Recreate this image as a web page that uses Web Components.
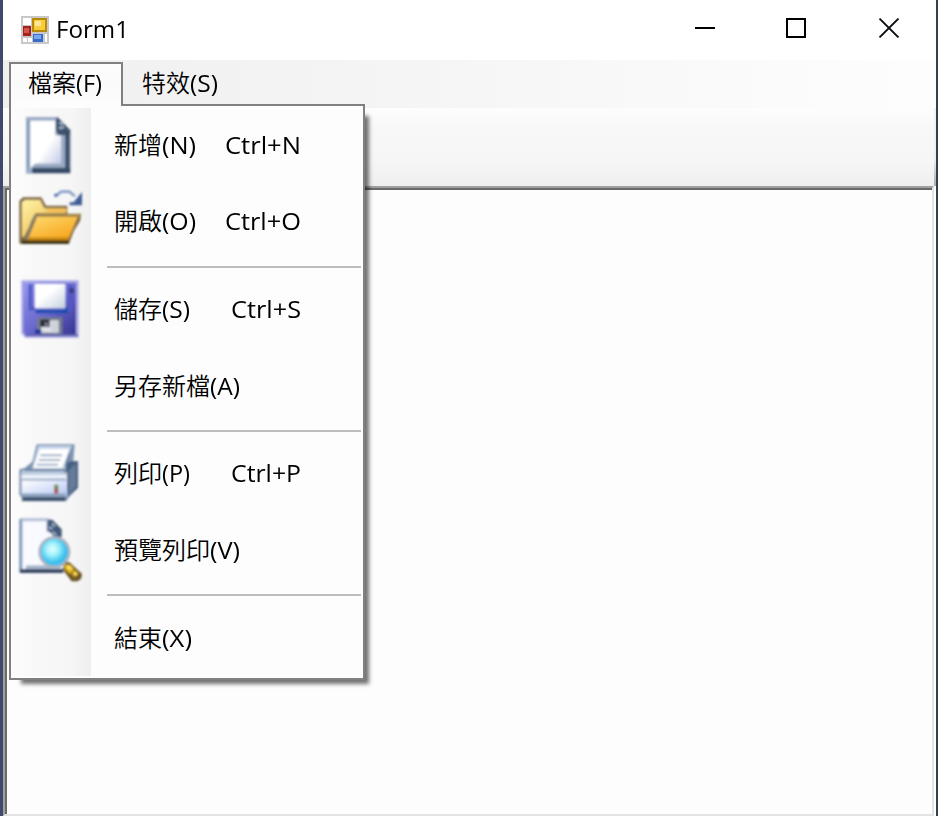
<!DOCTYPE html>
<html lang="zh-Hant"><head><meta charset="utf-8"><title>Form1</title>
<style>html,body{margin:0;width:938px;height:816px;overflow:hidden}body{font-family:"Open Sans","Noto Sans CJK TC",sans-serif}</style></head>
<body><form-window></form-window>
<script>
const define=(name,html,init)=>customElements.define(name,class extends HTMLElement{
  constructor(){super();this.attachShadow({mode:'open'}).innerHTML=html;}
  connectedCallback(){if(init)init.call(this);}
});

// A line of text; w is the width of its Latin part.
define('fit-text',`<style>:host{display:block;height:32px;white-space:pre;color:#000;font:24px/32px "Open Sans","Noto Sans CJK TC",sans-serif}
span{display:inline-block;transform-origin:0 50%}.c{font-family:"Noto Sans CJK TC",sans-serif;font-weight:350;width:auto}</style><span class="c"></span><span class="l"></span>`,function(){
  const c=this.shadowRoot.querySelector('.c'),l=this.shadowRoot.querySelector('.l');
  c.textContent=this.getAttribute('cjk')||'';l.textContent=this.getAttribute('latin')||'';
  const w=+this.getAttribute('w');this.style.width=(w+c.offsetWidth)+'px';
  l.style.transform='scaleX('+w/l.getBoundingClientRect().width+')';
});

const ART={
new:['3 9 240 228',`<path d="M48 36H142L181 76V205H48Z" fill="#354966"/><path d="M48 36H140V82H178V190H66V205H48Z" fill="#9badc9"/><path d="M57 47H135V91H153V178H72L61 190H57Z" fill="url(#paper)"/><path d="M57 46V190" stroke="#8296b5" stroke-width="7"/><path d="M142 40L178 76V91H145L138 76V44Z" fill="#40526c"/><path d="M148 53l11 5M147 69l15-2" stroke="#a9c0d4" stroke-width="6"/><path d="M171 80V194H69" fill="none" stroke="#374b68" stroke-width="11"/><path d="M158 94V180H76" fill="none" stroke="#9caac2" stroke-width="9"/>`],
open:['3 12 240 228',`<path d="M28 62L39 52H94L108 77H172V101H214L210 124L193 150L177 191H28Z" fill="#806b48"/><path d="M36 67L45 60H90L103 85H167V100H77L66 124L42 170H36Z" fill="url(#folder1)"/><path d="M110 91H170" stroke="#f6bd4e" stroke-width="8"/><path d="M82 109H204L176 175H55Z" fill="url(#folder2)"/><path d="M83 107H213" stroke="#a98a50" stroke-width="8"/><path d="M78 104L66 128L50 178" fill="none" stroke="#8a816b" stroke-width="9"/><path d="M53 177H174" stroke="#c6850c" stroke-width="9"/><path d="M35 187H177" stroke="#33280e" stroke-width="9"/><path d="M138 47L154 35H178L195 49" fill="none" stroke="#8aa1c9" stroke-width="8"/><path d="M133 46h9" stroke="#496fac" stroke-width="9"/><path d="M216 36V76H179V67H191Z" fill="#405f98"/>`],
save:['3 6 240 228',`<path d="M34 31H206V203H46L34 190Z" fill="#aaa9e7"/><path d="M40 38H198V196H48L40 185Z" fill="url(#disk)"/><path d="M61 43V116H181V45" fill="none" stroke="#5158c4" stroke-width="11"/><path d="M77 125H168V111" stroke="#164dae" stroke-width="9" fill="none"/><path d="M75 42H166V115H75Z" fill="url(#label)"/><path d="M178 62h14" stroke="#353b75" stroke-width="13"/><path d="M80 142H157V193H80Z" fill="#747b8c"/><path d="M93 151H146V188H93Z" fill="#dde0e7"/><path d="M91 149H119V171H91Z" fill="#202632"/><path d="M103 157H116V169H103Z" fill="#778"/><path d="M75 185H94" stroke="#203b9c" stroke-width="14"/><path d="M124 155h19v32h-19" fill="#cdd2db"/><path d="M46 196H204" stroke="#6262ad" stroke-width="6"/>`],
print:['3 3 240 228',`<path d="M80 28H194L190 78H204V159L178 185L168 199H35V188L28 180V103L44 99L67 80Z" fill="#7e95b1"/><path d="M85 32H185L162 106H65Z" fill="#c6d6e9"/><path d="M89 42H178L156 99H70Z" fill="#fff"/><path d="M91 61H156M86 75H151M80 89H144" stroke="#a0b0ca" stroke-width="6"/><path d="M182 38L163 96L179 79H204V158L174 184L165 115Z" fill="#475f80"/><path d="M177 105L198 84V154L175 179Z" fill="#657b98"/><path d="M42 105H163L172 115V131H34V112Z" fill="#bfcee1"/><path d="M44 105H161L170 112" fill="none" stroke="#7186a5" stroke-width="8"/><path d="M35 128H171V184H35Z" fill="url(#machine)"/><path d="M35 124H168" stroke="#eef5ff" stroke-width="8"/><path d="M36 134H168" stroke="#8ea2bd" stroke-width="5"/><path d="M36 180H167" stroke="#8aa0bc" stroke-width="9"/><path d="M38 192H166" stroke="#374b66" stroke-width="11"/><path d="M132 149h13v13h-13Z" fill="#6f9350"/><path d="M132 162h13v13h-13Z" fill="#b15353"/>`],
preview:['3 6 240 228',`<path d="M28 25H116L153 66V190H28Z" fill="#b4c0d6"/><path d="M38 34H109V67H147V166H54L42 179H38Z" fill="#f9faff"/><path d="M32 28V186" stroke="#829bbd" stroke-width="8"/><path d="M113 29H127L155 58V82H135L111 59Z" fill="#425a79"/><path d="M126 40l9 9M115 52l13 4M127 66l12 8" stroke="#a9bdd2" stroke-width="5"/><path d="M48 171H123" stroke="#a8b5cc" stroke-width="9"/><path d="M30 183H160" stroke="#344662" stroke-width="12"/><path d="M163 155L178 157L216 192L213 206L203 214H185L159 179Z" fill="#695328"/><path d="M164 163L181 165L205 192L193 204L164 176Z" fill="#e8b911"/><path d="M173 169l9 8M188 185l10 8" stroke="#fff187" stroke-width="7"/><path d="M181 190l14 11M197 178l-12 12" stroke="#91650e" stroke-width="5"/><circle cx="133" cy="126" r="48" fill="#a7b1bd"/><circle cx="133" cy="126" r="40" fill="url(#lens)"/>`]
};
const DEFS=`<defs><linearGradient id="paper" x2="1" y2="1"><stop offset=".55" stop-color="#fff"/><stop offset="1" stop-color="#b9c4e5"/></linearGradient><linearGradient id="folder1" x2="1" y2="1"><stop stop-color="#fff4a7"/><stop offset="1" stop-color="#e8ac38"/></linearGradient><linearGradient id="folder2" x2=".8" y2="1"><stop stop-color="#ffdc72"/><stop offset="1" stop-color="#f6a51c"/></linearGradient><linearGradient id="disk" x2="1" y2="1"><stop stop-color="#9697ef"/><stop offset=".5" stop-color="#6a69d0"/><stop offset="1" stop-color="#35328e"/></linearGradient><linearGradient id="label" x2="1" y2="1"><stop offset=".4" stop-color="#fff"/><stop offset="1" stop-color="#c2cfdf"/></linearGradient><linearGradient id="machine" x2=".8" y2="1"><stop offset=".1" stop-color="#fff"/><stop offset="1" stop-color="#bbccf6"/></linearGradient><radialGradient id="lens" cx=".43" cy=".4"><stop stop-color="#e6ffff"/><stop offset=".45" stop-color="#a2f2fb"/><stop offset="1" stop-color="#38bfee"/></radialGradient><filter id="soft"><feGaussianBlur stdDeviation="3"/></filter></defs>`;
define('menu-icon',`<style>:host{display:block;width:80px;height:76px}svg{display:block}</style>`,function(){
  const a=ART[this.getAttribute('name')];
  if(a)this.shadowRoot.innerHTML+=`<svg width="80" height="76" viewBox="${a[0]}">${DEFS}<g filter="url(#soft)">${a[1]}</g></svg>`;
});
define('menu-item',`<style>:host{display:flex;height:76px;align-items:center}.t{flex:1;display:flex;justify-content:space-between;padding:0 62px 3px 23px}.t>:nth-child(2){margin-top:1px}</style><slot></slot><div class="t"></div>`,function(){
  const g=n=>this.getAttribute(n);
  this.shadowRoot.querySelector('.t').innerHTML=`<fit-text cjk="${g('cjk')}" latin="${g('key')}" w="${g('w')}"></fit-text>`+(g('cut')?`<fit-text latin="${g('cut')}" w="${g('cw')}"></fit-text>`:'');
});
define('menu-separator',`<style>:host{display:flex;height:12px;padding:0 2px 0 96px;align-items:center;box-sizing:border-box}i{flex:1;height:2px;background:#bdbdbd;margin-top:2px}</style><i></i>`);
define('drop-menu',`<style>:host{display:block;box-sizing:border-box;width:356px;height:576px;border:2px solid #808080;padding:2px 0;background:#fdfdfd;box-shadow:8px 8px 4px -4px rgba(0,0,0,.55)}
div{height:568px;background:linear-gradient(90deg,#fcfcfc,#f8f8f8 35%,#f6f6f6 75%,#efefef) 0 0/80px 100% no-repeat}</style><div><slot></slot></div>`);
define('title-bar',`<style>:host{display:flex;height:60px;background:#fff;align-items:center;box-sizing:border-box;padding:0 34px 0 17px}fit-text{margin:-2px auto 0 6px}.b{display:block;margin-right:71px;margin-top:-4px}.b:nth-of-type(3){margin-right:72px}.b:last-child{margin-right:2px}</style>
<svg width="30" height="30" viewBox="0 0 30 30"><rect x="1" y="1" width="28" height="28" fill="#c8c8c8"/><path d="M3 3h8v7H3zM3 23h4v4H3zM8 23h4v4H8zM25 19h2v8h-2z" fill="#fff"/><path d="M12 3h15v14H12z" fill="#b88a0c"/><path d="M14 5h11v10H14z" fill="#fccc38"/><path d="M15 6h6v5h-6z" fill="#ffe59a"/><path d="M3 11h8v10H3z" fill="#a72019"/><path d="M4 13h5v5H4z" fill="#d3564d"/><path d="M13 19h10v8H13z" fill="#376cc7"/><path d="M14 20h7v4h-7z" fill="#78a7f1"/></svg>
<fit-text latin="Form1" w="73"></fit-text>
<svg class="b" width="20" height="20"><path d="M0 10H20" stroke="#000" stroke-width="2"/></svg><svg class="b" width="20" height="20"><path d="M1 1H19V19H1Z" fill="none" stroke="#000" stroke-width="2"/></svg><svg class="b" width="22" height="20"><path d="M1.5 .5L20.5 19.5M20.5 .5L1.5 19.5" stroke="#0b0f12" stroke-width="1.8"/></svg>`);
define('menu-strip',`<style>:host{display:flex;height:48px;box-sizing:border-box;padding:2px 0 0 6px;background:linear-gradient(90deg,#f0f0f0,#f3f3f3 30%,#fcfcfc 90%,#fdfdfd);position:relative}
.tab{width:114px;height:44px;box-sizing:border-box;border:2px solid #808080;border-bottom:0;background:linear-gradient(#fcfcfc,#fafafa 60%,#fdfdfd);padding:2px 0 0 17px;z-index:3}
.other{padding:4px 0 0 19px}drop-menu{position:absolute;left:6px;top:44px;z-index:2}</style>
<div class="tab"><fit-text cjk="檔案" latin="(F)" w="26"></fit-text></div><div class="other"><fit-text cjk="特效" latin="(S)" w="28"></fit-text></div>
<drop-menu>
<menu-item cjk="新增" key="(N)" w="34" cut="Ctrl+N" cw="76"><menu-icon name="new"></menu-icon></menu-item>
<menu-item cjk="開啟" key="(O)" w="34" cut="Ctrl+O" cw="76"><menu-icon name="open"></menu-icon></menu-item>
<menu-separator></menu-separator>
<menu-item cjk="儲存" key="(S)" w="28" cut="Ctrl+S" cw="70"><menu-icon name="save"></menu-icon></menu-item>
<menu-item cjk="另存新檔" key="(A)" w="30"><menu-icon></menu-icon></menu-item>
<menu-separator></menu-separator>
<menu-item cjk="列印" key="(P)" w="28" cut="Ctrl+P" cw="70"><menu-icon name="print"></menu-icon></menu-item>
<menu-item cjk="預覽列印" key="(V)" w="30"><menu-icon name="preview"></menu-icon></menu-item>
<menu-separator></menu-separator>
<menu-item cjk="結束" key="(X)" w="30"><menu-icon></menu-icon></menu-item>
</drop-menu>`);
define('tool-strip',`<style>:host{display:block;height:78px;box-sizing:border-box;background:linear-gradient(#fdfdfd,#f8f8f8 25%,#f6f6f6 70%,#eee);border-right:2px solid;border-image:linear-gradient(#f1f1f4 30%,#eee 65%,#aaa) 1}</style>`);
define('client-area',`<style>:host{display:block;flex:1;box-sizing:border-box;margin-right:2px;border:2px solid;border-color:#a0a0a0 #e3e3e3 #e3e3e3 #a0a0a0;background:#fdfdfd}div{height:100%;box-sizing:border-box;border:solid #696969;border-width:2px 0 0 2px}</style><div></div>`);
define('form-window',`<style>:host{display:flex;flex-direction:column;box-sizing:border-box;width:938px;height:816px;background:#fff;border-right:2px solid #364050;border-left:3px solid;border-left-color:#3d4a6b}</style>
<title-bar></title-bar><menu-strip></menu-strip><tool-strip></tool-strip><client-area></client-area>`);
</script></body></html>
